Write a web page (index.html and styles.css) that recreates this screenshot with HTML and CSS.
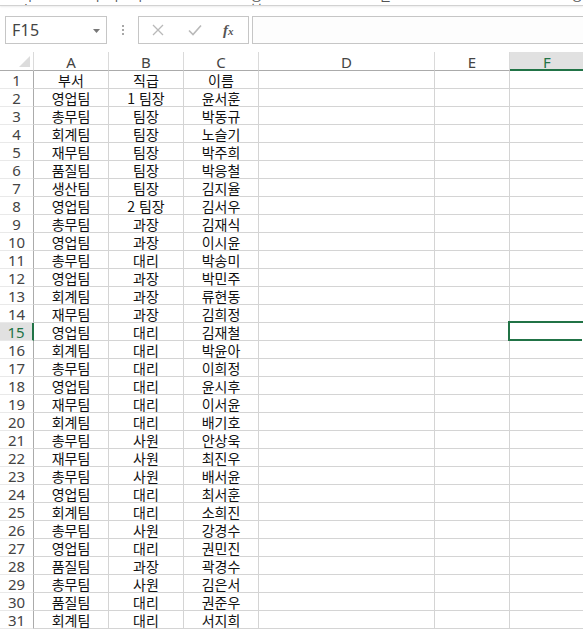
FILE: index.html
```html
<!DOCTYPE html>
<html lang="ko">
<head>
<meta charset="utf-8">
<link rel="stylesheet" href="styles.css">
</head>
<body>
<div class="ribbon-edge">
  <div class="ribbon-text">
    <span class="rt rt1">텍스</span>
    <span class="rt rt2">나</span>
    <span class="rt rt3">누</span>
    <span class="rt rt4">기</span>
    <span class="rt rt5">중복</span>
    <span class="rt rt6">된</span>
    <span class="rt rt7">항</span>
  </div>
</div>
<div class="fbar">
  <div class="namebox">
    <span class="nb-text">F15</span>
    <svg class="nb-arrow" width="7" height="4" viewBox="0 0 7 4"><path d="M0 0h7L3.5 4z" fill="#777"/></svg>
  </div>
  <div class="sep">
    <span class="dot"></span><span class="dot"></span><span class="dot"></span>
  </div>
  <div class="fxbox">
    <svg class="fx-ico" width="12" height="12" viewBox="0 0 12 12"><path d="M1 1l10 10M11 1L1 11" stroke="#b9b9b9" stroke-width="1.3" fill="none"/></svg>
    <svg class="fx-ico" width="14" height="12" viewBox="0 0 14 12"><path d="M1 6.5l4 4L13 1.5" stroke="#b9b9b9" stroke-width="1.6" fill="none"/></svg>
    <span class="fx-text"><i>f</i><span class="fx-x">x</span></span>
  </div>
  <div class="finput"></div>
</div>
<div class="sheet" id="sheet">
  <div class="corner"><span class="tri"></span></div>
  <div class="colh">A</div>
  <div class="colh">B</div>
  <div class="colh">C</div>
  <div class="colh">D</div>
  <div class="colh">E</div>
  <div class="colh colh-sel">F</div>
</div>
<script src="script.js"></script>
</body>
</html>
```

FILE: styles.css
```css
html, body {
  margin: 0;
  padding: 0;
  background: #fff;
  overflow: hidden;
  width: 583px;
  height: 630px;
}
body {
  font-family: "Noto Sans", "Noto Sans CJK KR", sans-serif;
}
.ribbon-edge {
  height: 5px;
  overflow: hidden;
  border-bottom: 1px solid #d2d2d2;
  box-shadow: 0 1px 2px rgba(0,0,0,0.08);
  background: #fff;
  position: relative;
}
.ribbon-text {
  display: flex;
  margin-top: -12px;
  font-family: "Noto Sans CJK KR", sans-serif;
  font-size: 13px;
  line-height: 14px;
  color: #555;
}
.rt { display: block; }
.rt1 { margin-left: 20px; }
.rt2 { margin-left: 50px; }
.rt3 { margin-left: 10px; }
.rt4 { margin-left: 8px; }
.rt5 { margin-left: 108px; }
.rt6 { margin-left: 110px; }
.rt7 { margin-left: 180px; }

.fbar {
  display: flex;
  align-items: center;
  margin-top: 10px;
  height: 28px;
  background: #fff;
}
.namebox {
  box-sizing: border-box;
  margin-left: 5px;
  width: 102px;
  height: 28px;
  border: 1px solid #c6c6c6;
  display: flex;
  align-items: center;
  justify-content: space-between;
  padding: 0 6px 0 6px;
}
.nb-text {
  font-family: "Noto Sans", sans-serif;
  font-size: 16px;
  color: #444;
  letter-spacing: 0.3px;
}
.nb-arrow { margin-top: 1px; }
.sep {
  width: 31px;
  display: flex;
  flex-direction: column;
  align-items: center;
  gap: 2px;
}
.dot {
  width: 2px;
  height: 2px;
  background: #a8a8a8;
}
.fxbox {
  box-sizing: border-box;
  width: 111px;
  height: 28px;
  border: 1px solid #c6c6c6;
  display: flex;
  align-items: center;
  padding-left: 13px;
  gap: 24px;
}
.fx-text {
  font-family: "Liberation Serif", serif;
  font-size: 15px;
  color: #555;
  font-weight: bold;
  margin-left: -3px;
}
.fx-text i { font-style: italic; }
.fx-x { font-style: italic; font-size: 11px; font-weight: bold; }
.finput {
  box-sizing: border-box;
  margin-left: 3px;
  flex: 1;
  height: 28px;
  border: 1px solid #c6c6c6;
  border-right: none;
  background: #fdfdfd;
}

.sheet {
  margin-top: 8px;
  display: grid;
  grid-template-columns: 34px 75px 75px 75px 176px 75px 75px;
  grid-template-rows: 19px;
  grid-auto-rows: 18px;
  width: 584px;
}
.sheet > div {
  box-sizing: border-box;
  border-right: 1px solid #d4d4d4;
  border-bottom: 1px solid #d4d4d4;
  display: flex;
  align-items: center;
  justify-content: center;
  white-space: nowrap;
  overflow: hidden;
}
.sheet > .corner {
  border-right: 1px solid #dadada;
  border-bottom: 1px solid #ababab;
  position: relative;
}
.tri {
  position: absolute;
  right: 3px;
  bottom: 3px;
  width: 0;
  height: 0;
  border-left: 11px solid transparent;
  border-bottom: 11px solid #dcdcdc;
}
.sheet > .colh {
  border-right: 1px solid #dadada;
  border-bottom: 1px solid #ababab;
  font-family: "Noto Sans", sans-serif;
  font-size: 15px;
  color: #444;
  line-height: 16px;
  padding-top: 1px;
}
.sheet > .colh-sel {
  background: #e1e1e1;
  color: #217346;
  border-bottom: 2px solid #217346;
  padding-top: 2px;
}
.sheet > .rowh {
  border-right: 1px solid #ababab;
  border-bottom: 1px solid #e9e9e9;
  font-family: "Noto Sans", sans-serif;
  font-size: 15px;
  color: #444;
  line-height: 16px;
}
.sheet > .rowh-sel {
  background: #e1e1e1;
  color: #217346;
  border-right: 2px solid #217346;
}
.sheet > .cell {
  font-family: "Noto Sans CJK KR", sans-serif;
  font-size: 14px;
  color: #111;
  line-height: 16px;
}
.sheet > .cell-sel {
  position: relative;
  overflow: visible;
}
.selbox {
  position: absolute;
  top: -2px;
  left: -2px;
  right: -1px;
  bottom: -1px;
  border: 2px solid #217346;
}
.handle {
  position: absolute;
  right: -2px;
  bottom: -3px;
  width: 3px;
  height: 5px;
  background: #217346;
  border-left: 1px solid #fff;
  border-top: 1px solid #fff;
}
```

FILE: script.js
```js
const rows = [
  ["부서","직급","이름"],
  ["영업팀","1 팀장","윤서훈"],
  ["총무팀","팀장","박동규"],
  ["회계팀","팀장","노슬기"],
  ["재무팀","팀장","박주희"],
  ["품질팀","팀장","박응철"],
  ["생산팀","팀장","김지율"],
  ["영업팀","2 팀장","김서우"],
  ["총무팀","과장","김재식"],
  ["영업팀","과장","이시윤"],
  ["총무팀","대리","박송미"],
  ["영업팀","과장","박민주"],
  ["회계팀","과장","류현동"],
  ["재무팀","과장","김희정"],
  ["영업팀","대리","김재철"],
  ["회계팀","대리","박윤아"],
  ["총무팀","대리","이희정"],
  ["영업팀","대리","윤시후"],
  ["재무팀","대리","이서윤"],
  ["회계팀","대리","배기호"],
  ["총무팀","사원","안상욱"],
  ["재무팀","사원","최진우"],
  ["총무팀","사원","배서윤"],
  ["영업팀","대리","최서훈"],
  ["회계팀","대리","소희진"],
  ["총무팀","사원","강경수"],
  ["영업팀","대리","권민진"],
  ["품질팀","과장","곽경수"],
  ["총무팀","사원","김은서"],
  ["품질팀","대리","권준우"],
  ["회계팀","대리","서지희"]
];
const sheet = document.getElementById("sheet");
rows.forEach((r, i) => {
  const n = i + 1;
  const h = document.createElement("div");
  h.className = "rowh" + (n === 15 ? " rowh-sel" : "");
  h.textContent = n;
  sheet.appendChild(h);
  for (let c = 0; c < 6; c++) {
    const d = document.createElement("div");
    d.className = "cell";
    if (c < 3) d.textContent = r[c];
    if (n === 15 && c === 5) {
      d.classList.add("cell-sel");
      const s = document.createElement("span");
      s.className = "selbox";
      d.appendChild(s);
      const hd = document.createElement("span");
      hd.className = "handle";
      d.appendChild(hd);
    }
    sheet.appendChild(d);
  }
});
```
